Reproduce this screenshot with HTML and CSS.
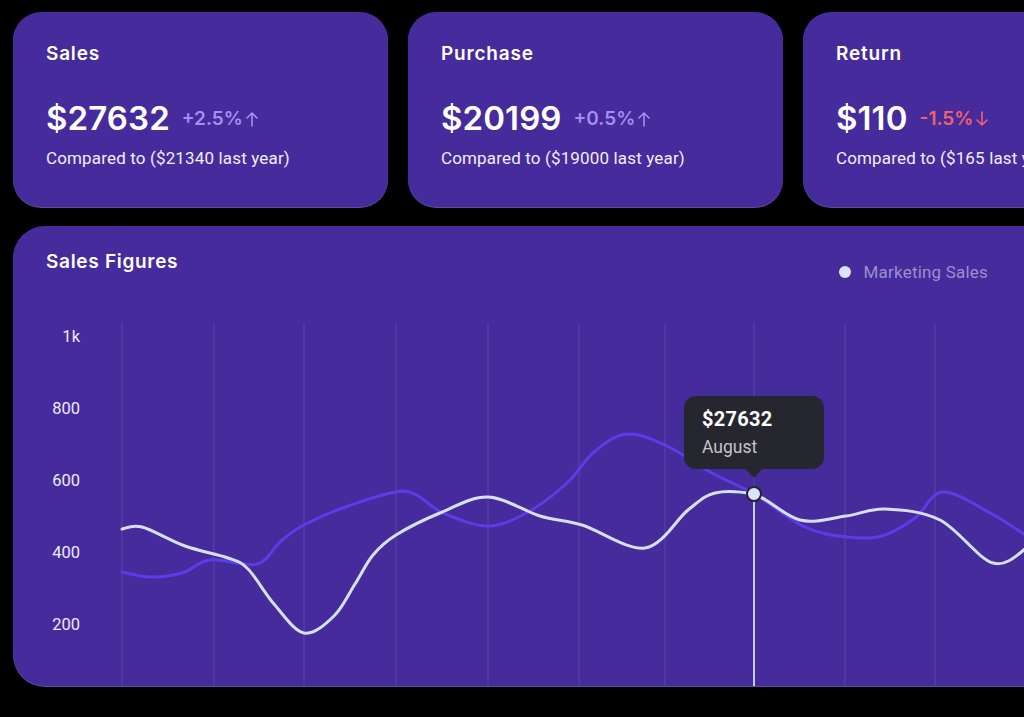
FILE: index.html
```html
<!DOCTYPE html>
<html lang="en">
<head>
<meta charset="utf-8">
<title>Sales Dashboard</title>
<link rel="stylesheet" href="styles.css">
</head>
<body>
<div class="page">
  <div class="cards">
    <div class="card stat">
      <div class="stat-title">Sales</div>
      <div class="stat-value">
        <span class="amount">$27632</span>
        <span class="delta up">+2.5%<svg class="arrow" viewBox="0 0 14 16" width="14" height="16"><path d="M7 15V2M2 7l5-5 5 5"/></svg></span>
      </div>
      <div class="stat-note">Compared to ($21340 last year)</div>
    </div>
    <div class="card stat">
      <div class="stat-title">Purchase</div>
      <div class="stat-value">
        <span class="amount">$20199</span>
        <span class="delta up">+0.5%<svg class="arrow" viewBox="0 0 14 16" width="14" height="16"><path d="M7 15V2M2 7l5-5 5 5"/></svg></span>
      </div>
      <div class="stat-note">Compared to ($19000 last year)</div>
    </div>
    <div class="card stat">
      <div class="stat-title">Return</div>
      <div class="stat-value">
        <span class="amount">$110</span>
        <span class="delta down">-1.5%<svg class="arrow" viewBox="0 0 14 16" width="14" height="16"><path d="M7 1v13M2 9l5 5 5-5"/></svg></span>
      </div>
      <div class="stat-note">Compared to ($165 last year)</div>
    </div>
  </div>

  <div class="card chart">
    <div class="chart-head">
      <div class="chart-title">Sales Figures</div>
      <div class="legend"><span class="legend-dot"></span>Marketing Sales</div>
    </div>
    <div class="chart-body">
      <div class="y-axis">
        <span>1k</span>
        <span>800</span>
        <span>600</span>
        <span>400</span>
        <span>200</span>
      </div>
      <div class="plot">
        <svg class="plot-svg" width="960" height="386" viewBox="113 300 960 386">
          <g class="grid">
            <line x1="122" y1="323" x2="122" y2="686"/>
            <line x1="214" y1="323" x2="214" y2="686"/>
            <line x1="304" y1="323" x2="304" y2="686"/>
            <line x1="396" y1="323" x2="396" y2="686"/>
            <line x1="488" y1="323" x2="488" y2="686"/>
            <line x1="579" y1="323" x2="579" y2="686"/>
            <line x1="665" y1="323" x2="665" y2="686"/>
            <line x1="754" y1="323" x2="754" y2="686"/>
            <line x1="845" y1="323" x2="845" y2="686"/>
            <line x1="935" y1="323" x2="935" y2="686"/>
          </g>
          <line class="focus-line" x1="754" y1="494" x2="754" y2="686"/>
          <path class="line-purple" d="M122 572 C126.7 572.8 140 576.8 150 577 C160 577.2 172 575.8 182 573 C192 570.2 197.5 561.5 210 560 C222.5 558.5 245.3 567 257 564 C268.7 561 272.5 548.3 280 542 C287.5 535.7 292 531.5 302 526 C312 520.5 323.2 514.8 340 509 C356.8 503.2 385.8 491.7 403 491 C420.2 491.7 428.8 507.2 443 513 C457.2 518.8 473.8 526.2 488 526 C502.2 525.8 514.8 519.2 528 512 C541.2 504.8 556 493 567 483 C578 473 584 460.2 594 452 C604 443.8 614.8 435 627 434 C639.2 433 653.2 439.7 667 446 C680.8 452.3 695.5 464 710 472 C724.5 480 738.2 484.8 754 494 C769.8 503.2 789.5 519.8 805 527 C820.5 534.2 834.2 535.5 847 537 C859.8 538.5 870.7 539.2 882 536 C893.3 532.8 904.8 525.3 915 518 C925.2 510.7 930.2 492.7 943 492 C955.8 491.3 977.5 506.3 992 514 C1006.5 521.7 1020 532 1030 538"/>
          <path class="line-light" d="M122 529 C125.3 528.7 131.5 524.2 142 527 C152.5 529.8 170.7 540.8 185 546 C199.3 551.2 217.5 554.2 228 558 C238.5 561.8 240.3 561.3 248 569 C255.7 576.7 264.7 593.3 274 604 C283.3 614.7 294 631 304 633 C314 635 325.5 624.2 334 616 C342.5 607.8 348.5 594.2 355 584 C361.5 573.8 366.2 563.2 373 555 C379.8 546.8 384.8 542 396 535 C407.2 528 424.7 519.3 440 513 C455.3 506.7 471.3 496.5 488 497 C504.7 497.5 524.3 511.3 540 516 C555.7 520.7 564.5 519.7 582 525 C599.5 530.3 627.3 550.5 645 548 C662.7 545.5 676.3 519.2 688 510 C699.7 500.8 704 495.7 715 493 C726 490.3 739.8 491.5 754 494 C768.2 498.5 784.7 516.3 800 520 C815.3 523.7 831.8 517.8 846 516 C860.2 514.2 869.3 508.3 885 509 C900.7 509.7 922 511 940 520 C958 529 978 558.8 993 563 C1008 567.2 1020 552 1030 545"/>
          <path class="tip-arrow" d="M745 468 L754 478 L763 468 Z"/>
          <circle class="focus-dot" cx="754" cy="494" r="7"/>
        </svg>
        <div class="tooltip">
          <div class="tooltip-value">$27632</div>
          <div class="tooltip-label">August</div>
        </div>
      </div>
    </div>
  </div>
</div>
</body>
</html>
```

FILE: styles.css
```css
html, body {
  margin: 0;
  padding: 0;
}

body {
  background: #000;
  width: 1024px;
  height: 717px;
  overflow: hidden;
  font-family: Roboto, "Liberation Sans", sans-serif;
  color: #fff;
}

.page {
  display: flex;
  flex-direction: column;
  padding: 12px 0 0 13px;
}

.cards {
  display: flex;
  gap: 20px;
}

.card {
  background: #452b9b;
  box-shadow: 0 1px 0 #57509a;
  flex-shrink: 0;
}

.stat {
  width: 375px;
  height: 195px;
  border-radius: 28px;
  box-sizing: border-box;
  padding: 30px 33px 0 33px;
  display: flex;
  flex-direction: column;
}

.stat-title {
  font-family: Inter, "Open Sans", sans-serif;
  font-weight: 600;
  font-size: 19px;
  line-height: 24px;
  letter-spacing: 0.8px;
}

.stat-value {
  margin-top: 32px;
  height: 40px;
  display: flex;
  align-items: center;
  gap: 12px;
}

.amount {
  font-family: Inter, "Open Sans", sans-serif;
  font-weight: 600;
  font-size: 33px;
  line-height: 40px;
  letter-spacing: 0.1px;
}

.delta {
  display: flex;
  align-items: center;
  gap: 2px;
  font-family: Inter, "Open Sans", sans-serif;
  font-weight: 600;
  font-size: 19px;
  line-height: 24px;
  margin-top: 1px;
}

.delta.up {
  color: #a48ef4;
}

.delta.down {
  color: #f0626c;
}

.arrow {
  fill: none;
  stroke: currentColor;
  stroke-width: 1.6;
  stroke-linecap: round;
  stroke-linejoin: round;
}

.stat-note {
  margin-top: 9px;
  font-size: 17px;
  line-height: 22px;
  letter-spacing: 0.15px;
  color: #f1eeff;
  white-space: nowrap;
}

.chart {
  margin-top: 19px;
  width: 1060px;
  height: 460px;
  border-radius: 32px;
  display: flex;
  flex-direction: column;
  overflow: hidden;
}

.chart-head {
  height: 74px;
  box-sizing: border-box;
  padding: 24px 85px 0 33px;
  display: flex;
  justify-content: space-between;
  align-items: flex-start;
}

.chart-title {
  font-family: Inter, "Open Sans", sans-serif;
  font-weight: 600;
  font-size: 19px;
  line-height: 24px;
  letter-spacing: 0.7px;
}

.legend {
  margin-top: 11px;
  display: flex;
  align-items: center;
  gap: 13px;
  font-size: 17px;
  line-height: 22px;
  letter-spacing: 0.2px;
  color: #9a90cf;
}

.legend-dot {
  width: 12px;
  height: 12px;
  border-radius: 50%;
  background: #d9e3ff;
}

.chart-body {
  display: flex;
  flex: 1;
}

.y-axis {
  width: 100px;
  box-sizing: border-box;
  padding-right: 33px;
  padding-top: 1px;
  display: flex;
  flex-direction: column;
  align-items: flex-end;
}

.y-axis span {
  font-size: 16.5px;
  line-height: 72px;
  color: #efeaff;
}

.plot {
  position: relative;
  width: 960px;
  height: 386px;
}

.plot-svg {
  display: block;
}

.grid line {
  stroke: rgba(255, 255, 255, 0.13);
  stroke-width: 1;
}

.focus-line {
  stroke: #c3ccff;
  stroke-width: 2;
}

.line-purple {
  fill: none;
  stroke: #5b3ce6;
  stroke-width: 3;
  stroke-linecap: round;
}

.line-light {
  fill: none;
  stroke: #d6e0ff;
  stroke-width: 3;
  stroke-linecap: round;
}

.tip-arrow {
  fill: #26262e;
}

.focus-dot {
  fill: #d9e5ff;
  stroke: #26262e;
  stroke-width: 2;
}

.tooltip {
  position: absolute;
  left: 571px;
  top: 96px;
  width: 140px;
  height: 73px;
  box-sizing: border-box;
  padding: 10px 18px 0 18px;
  background: #26262e;
  border-radius: 12px;
}

.tooltip-value {
  font-weight: 700;
  font-size: 20px;
  line-height: 27px;
  letter-spacing: 0.3px;
  color: #fff;
}

.tooltip-label {
  margin-top: 3px;
  font-size: 17.5px;
  line-height: 22px;
  color: #c4c3cc;
}
```
